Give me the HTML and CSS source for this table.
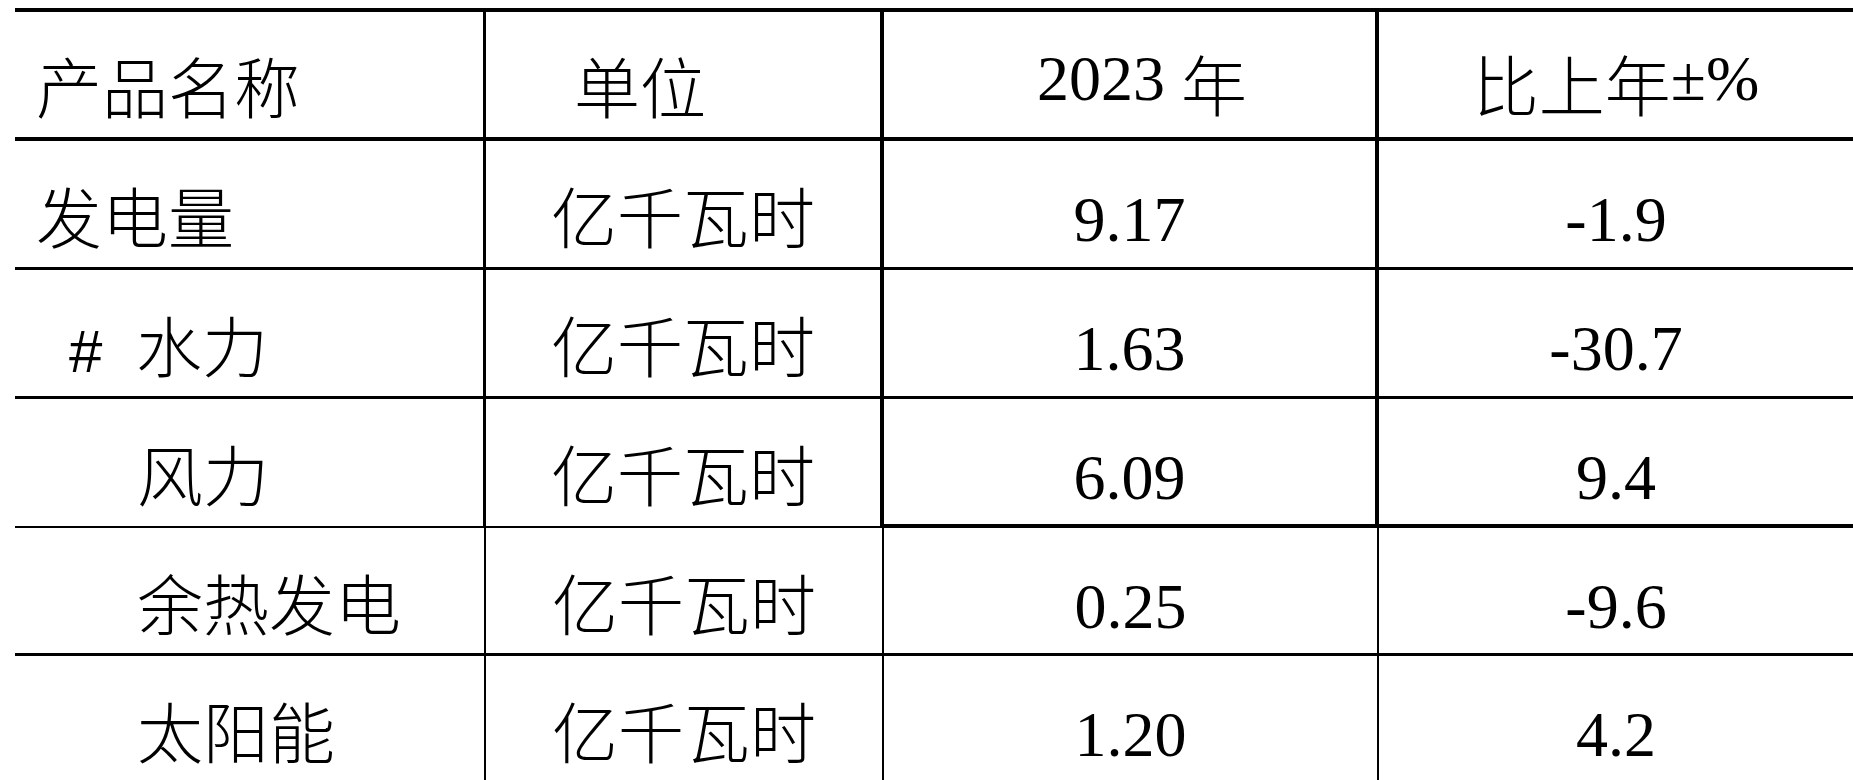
FILE: index.html
```html
<!DOCTYPE html>
<html lang="zh-CN">
<head>
<meta charset="utf-8">
<title>发电量</title>
<link rel="stylesheet" href="styles.css">
</head>
<body>
<div class="sheet" role="table">
  <div class="cell r0 c1 cjk name" role="columnheader">产品名称</div>
  <div class="cell r0 c2 cjk unit-h" role="columnheader">单位</div>
  <div class="cell r0 c3 num year-h" role="columnheader">2023 <span class="cjk-in">年</span></div>
  <div class="cell r0 c4 num" role="columnheader"><span class="cjk-in">比上年</span>±%</div>

  <div class="cell r1 c1 cjk name">发电量</div>
  <div class="cell r1 c2 cjk unit">亿千瓦时</div>
  <div class="cell r1 c3 num">9.17</div>
  <div class="cell r1 c4 num">-1.9</div>

  <div class="cell r2 c1 cjk hash"><span class="mark">#</span>水力</div>
  <div class="cell r2 c2 cjk unit">亿千瓦时</div>
  <div class="cell r2 c3 num">1.63</div>
  <div class="cell r2 c4 num">-30.7</div>

  <div class="cell r3 c1 cjk sub">风力</div>
  <div class="cell r3 c2 cjk unit">亿千瓦时</div>
  <div class="cell r3 c3 num">6.09</div>
  <div class="cell r3 c4 num">9.4</div>

  <div class="cell r4 c1 cjk sub">余热发电</div>
  <div class="cell r4 c2 cjk unit">亿千瓦时</div>
  <div class="cell r4 c3 num">0.25</div>
  <div class="cell r4 c4 num">-9.6</div>

  <div class="cell r5 c1 cjk sub">太阳能</div>
  <div class="cell r5 c2 cjk unit">亿千瓦时</div>
  <div class="cell r5 c3 num">1.20</div>
  <div class="cell r5 c4 num">4.2</div>
</div>
</body>
</html>
```
FILE: styles.css
```css
html, body {
  margin: 0;
  padding: 0;
  background: #ffffff;
  color: #000000;
}

body {
  overflow: hidden;
}

.sheet {
  display: grid;
  grid-template-columns: 471px 398px 495px 474px;
  grid-template-rows: 133px 129px 129px 129px 128px 128px;
  margin: 8px 0 0 15px;
  width: 1838px;
}

.cell {
  box-sizing: border-box;
  border-style: solid;
  border-color: #000000;
  border-width: 0 0 3px 0;
  white-space: nowrap;
  overflow: visible;
}

/* vertical rules */
.c1 { border-right-width: 3px; }
.c2 { border-right-width: 4px; }
.c3 { border-right-width: 4px; }
.c4 { border-right-width: 0; }

/* horizontal rules */
.r0 { border-top-width: 4px; border-bottom-width: 4px; }
.r3.c1, .r3.c2 { border-bottom-width: 2px; }
.r3.c3, .r3.c4 { border-bottom-width: 4px; }
.r4.c1, .r4.c2, .r4.c3,
.r5.c1, .r5.c2, .r5.c3 { border-right-width: 2px; }

/* text styles */
.cjk {
  font-family: "Noto Sans CJK SC", "Noto Sans", sans-serif;
  font-weight: 300;
  font-size: 66px;
  line-height: 66px;
  padding-top: 40px;
}

.num {
  font-family: "Liberation Serif", "Times New Roman", serif;
  font-size: 64px;
  line-height: 64px;
  padding-top: 47px;
  text-align: center;
}

.r0.cjk { padding-top: 39px; }
.r0.num { padding-top: 35px; }

.cjk-in {
  font-family: "Noto Sans CJK SC", "Noto Sans", sans-serif;
  font-weight: 300;
  font-size: 66px;
  line-height: 64px;
  vertical-align: -11px;
}

.name { padding-left: 21px; }
.sub { padding-left: 122px; }
.hash { padding-left: 54px; }

.mark {
  display: inline-block;
  width: 67px;
  font-family: "Liberation Sans", Arial, sans-serif;
  font-weight: 400;
  font-size: 60px;
}

.unit-h { padding-left: 88px; }
.unit { text-align: center; }

.year-h {
  text-align: left;
  padding-left: 153px;
}
```
